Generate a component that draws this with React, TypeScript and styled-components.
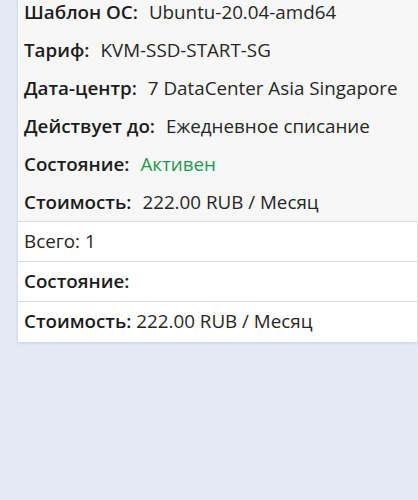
import React from "react";
import styled, { createGlobalStyle } from "styled-components";

const Global = createGlobalStyle`
  html, body {
    margin: 0;
    padding: 0;
    background: #e3eaf3;
    font-family: "Open Sans", "Noto Sans", sans-serif;
    color: #222;
  }
`;

const Page = styled.div`
  min-height: 500px;
  padding-left: 18px;
  overflow: hidden;
`;

const Panel = styled.div`
  width: 400px;
  margin-top: -7px;
  background: #fff;
  box-shadow: 0 1px 3px rgba(0, 0, 0, 0.12);
`;

const Details = styled.div`
  background: #f7f7f7;
  padding: 0 6px;
  border-bottom: 1px solid #d9d9d9;
`;

const DetailRow = styled.div`
  display: flex;
  align-items: baseline;
  height: 38px;
  line-height: 38px;
  font-size: 18.8px;
  white-space: nowrap;
`;

const Label = styled.span`
  font-weight: 600;
  color: #1c1c1c;
`;

const Value = styled.span<{ $tone?: "ok" }>`
  margin-left: 11px;
  color: ${(p) => (p.$tone === "ok" ? "#1c9a55" : "#262626")};
`;

const Summary = styled.div`
  border-right: 1px solid #dcdcdc;
`;

const SummaryRow = styled.div`
  height: 39px;
  line-height: 39px;
  padding: 0 6px;
  font-size: 18.8px;
  color: #262626;
  white-space: nowrap;
  border-bottom: 1px solid #dcdcdc;
  &:last-child {
    border-bottom: none;
    height: 40px;
  }
`;

const details: { label: string; value: string; tone?: "ok" }[] = [
  { label: "Шаблон ОС:", value: "Ubuntu-20.04-amd64" },
  { label: "Тариф:", value: "KVM-SSD-START-SG" },
  { label: "Дата-центр:", value: "7 DataCenter Asia Singapore" },
  { label: "Действует до:", value: "Ежедневное списание" },
  { label: "Состояние:", value: "Активен", tone: "ok" },
  { label: "Стоимость:", value: "222.00 RUB / Месяц" },
];

export default function App() {
  return (
    <>
      <Global />
      <Page>
        <Panel>
          <Details>
            {details.map((d) => (
              <DetailRow key={d.label}>
                <Label>{d.label}</Label>
                <Value $tone={d.tone}>{d.value}</Value>
              </DetailRow>
            ))}
          </Details>
          <Summary>
            <SummaryRow>Всего: 1</SummaryRow>
            <SummaryRow>
              <Label>Состояние:</Label>
            </SummaryRow>
            <SummaryRow>
              <Label>Стоимость:</Label> 222.00 RUB / Месяц
            </SummaryRow>
          </Summary>
        </Panel>
      </Page>
    </>
  );
}
